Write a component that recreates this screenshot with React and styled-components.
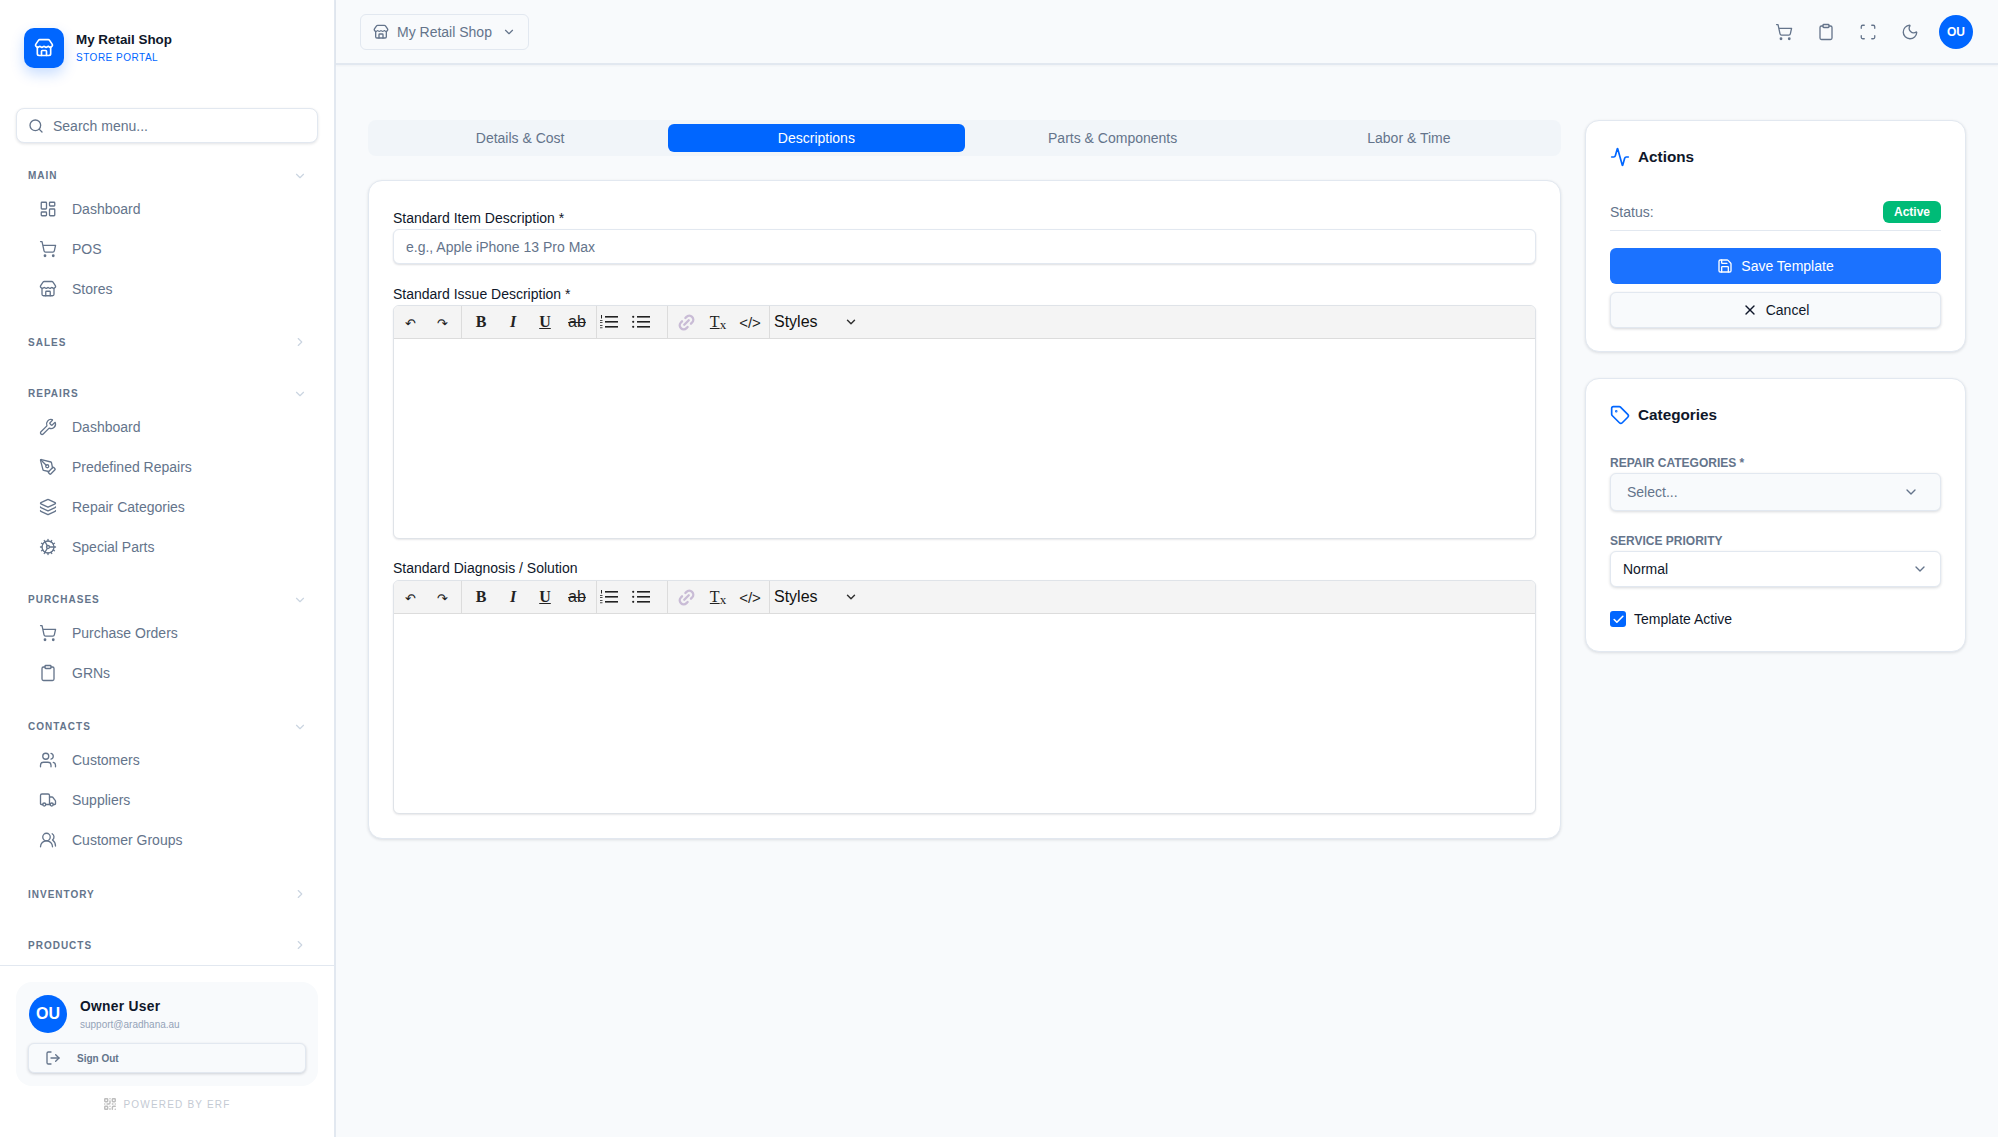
import styled, { createGlobalStyle } from "styled-components";
import {
  Activity, Check, ChevronDown, ChevronRight, Clipboard, Layers, LayoutDashboard, LogOut, Moon, PenTool,
  QrCode, Save, Scan, Search, ShoppingCart, Store, Tag, Truck, Users, UsersRound, Wrench, X, Link2, Cog,
} from "lucide-react";

const GlobalStyle = createGlobalStyle`
  * { box-sizing: border-box; }
  html, body { margin: 0; height: 100%; }
  body {
    font-family: "Liberation Sans", Arial, sans-serif;
    background: #f8fafc;
    color: #0f172a;
    overflow: hidden;
  }
`;

const Shell = styled.div`
  display: flex;
  width: 1998px;
  height: 1137px;
`;

/* sidebar */
const Sidebar = styled.aside`
  width: 336px;
  flex: none;
  display: flex;
  flex-direction: column;
  background: #fff;
  border-right: 2px solid #e2e8f0;
`;

const Brand = styled.div`
  display: flex;
  align-items: center;
  gap: 12px;
  padding: 28px 24px 0;
`;

const LogoBox = styled.div`
  width: 40px;
  height: 40px;
  border-radius: 10px;
  background: #0066ff;
  color: #fff;
  display: flex;
  align-items: center;
  justify-content: center;
  box-shadow: 0 6px 14px rgba(0, 102, 255, 0.22);
`;

const BrandName = styled.div`
  font-size: 13.4px;
  font-weight: 700;
  line-height: 18px;
  color: #0f172a;
`;

const BrandSub = styled.div`
  font-size: 10px;
  line-height: 14px;
  margin-top: 2px;
  letter-spacing: 0.5px;
  color: #0066ff;
`;

const SearchBox = styled.label`
  display: flex;
  align-items: center;
  gap: 7px;
  height: 35px;
  margin: 40px 16px 0;
  padding: 0 11px;
  border: 1px solid #e2e8f0;
  border-radius: 8px;
  background: #fff;
  color: #64748b;
  box-shadow: 0 1px 3px rgba(15, 23, 42, 0.12);
`;

const SearchInput = styled.input`
  border: 0;
  outline: 0;
  flex: 1;
  min-width: 0;
  font: 14px "Liberation Sans", Arial, sans-serif;
  background: transparent;
  &::placeholder { color: #64748b; opacity: 1; }
`;

const Nav = styled.nav`
  flex: 1;
  min-height: 0;
  overflow: hidden;
  padding-top: 19px;
`;

const Section = styled.div`
  margin-bottom: ${(p) => p.$after}px;
`;

const SectionHead = styled.div`
  display: flex;
  align-items: center;
  justify-content: space-between;
  height: ${(p) => (p.$open ? "27px" : "26px")};
  padding: 0 27px 0 28px;
  font-size: 10px;
  font-weight: 700;
  letter-spacing: 1px;
  color: #64748b;
  svg { color: #cbd5e1; }
`;

const NavItem = styled.a`
  display: flex;
  align-items: center;
  gap: 15px;
  height: 40px;
  padding-left: 39px;
  font-size: 14px;
  color: #64748b;
`;

const Footer = styled.div`
  height: 172px;
  flex: none;
  border-top: 1px solid #e2e8f0;
  padding: 16px 16px 0;
`;

const UserCard = styled.div`
  height: 104px;
  padding: 13px 12px;
  border-radius: 16px;
  background: #f8fafc;
`;

const UserRow = styled.div`
  display: flex;
  align-items: center;
  gap: 13px;
  padding-left: 1px;
`;

const Avatar = styled.div`
  width: ${(p) => p.$size}px;
  height: ${(p) => p.$size}px;
  flex: none;
  margin-left: ${(p) => p.$shift || 0}px;
  border-radius: 50%;
  background: #0066ff;
  color: #fff;
  font-size: ${(p) => p.$font}px;
  font-weight: 700;
  display: flex;
  align-items: center;
  justify-content: center;
`;

const UserName = styled.div`
  font-size: 13.8px;
  font-weight: 700;
  letter-spacing: 0.3px;
  line-height: 18px;
  padding-top: 2px;
`;

const UserMail = styled.div`
  font-size: 10px;
  line-height: 14px;
  margin-top: 2px;
  color: #94a3b8;
`;

const SignOut = styled.button`
  display: flex;
  align-items: center;
  gap: 16px;
  width: 100%;
  height: 30px;
  margin-top: 10px;
  padding: 0 16px;
  border: 1px solid #e2e8f0;
  border-radius: 6px;
  background: #f8fafc;
  color: #64748b;
  font: 700 10px "Liberation Sans", Arial, sans-serif;
  box-shadow: 0 1px 3px rgba(15, 23, 42, 0.18);
`;

const Powered = styled.div`
  display: flex;
  align-items: center;
  justify-content: center;
  gap: 6px;
  margin-top: 11px;
  font-size: 10px;
  letter-spacing: 1.2px;
  color: #c4cad3;
  svg { color: #bdbdbd; }
`;

/* main column */
const Main = styled.main`
  flex: 1;
  min-width: 0;
  display: flex;
  flex-direction: column;
`;

const Topbar = styled.header`
  height: 65px;
  flex: none;
  display: flex;
  align-items: center;
  justify-content: space-between;
  padding: 0 25px 0 24px;
  border-bottom: 2px solid #e2e8f0;
  box-shadow: 0 1px 2px rgba(15, 23, 42, 0.04);
`;

const ShopPicker = styled.div`
  display: flex;
  align-items: center;
  gap: 8px;
  width: 169px;
  height: 36px;
  padding: 0 12px;
  border: 1px solid #e2e8f0;
  border-radius: 6px;
  font-size: 14px;
  color: #64748b;
  span { flex: 1; white-space: nowrap; }
`;

const TopActions = styled.div`
  display: flex;
  align-items: center;
  gap: 24px;
  color: #64748b;
`;

const Content = styled.div`
  display: grid;
  grid-template-columns: 1fr 381px;
  gap: 24px;
  align-items: start;
  padding: 55px 32px 0 32px;
`;

const Tabs = styled.div`
  display: grid;
  grid-template-columns: repeat(4, 1fr);
  height: 36px;
  padding: 4px;
  margin-bottom: 24px;
  border-radius: 8px;
  background: #f1f5f9;
`;

const Tab = styled.div`
  display: flex;
  align-items: center;
  justify-content: center;
  border-radius: 6px;
  font-size: 14px;
  color: ${(p) => (p.$active ? "#fff" : "#64748b")};
  background: ${(p) => (p.$active ? "#0066ff" : "transparent")};
`;

const Card = styled.section`
  background: #fff;
  border: 1px solid #e2e8f0;
  border-radius: 14px;
  box-shadow: 0 1px 3px rgba(15, 23, 42, 0.12);
  padding: ${(p) => p.$pad || "24px"};
`;

const FieldLabel = styled.label`
  display: block;
  font-size: 14px;
  line-height: 17px;
  margin-top: ${(p) => p.$top || 0}px;
  margin-bottom: ${(p) => p.$bottom || 2}px;
`;

const TextInput = styled.input`
  display: block;
  width: 100%;
  height: 35px;
  padding: 0 12px;
  border: 1px solid #e2e8f0;
  border-radius: 6px;
  outline: 0;
  font: 14px "Liberation Sans", Arial, sans-serif;
  box-shadow: 0 1px 2px rgba(15, 23, 42, 0.14);
  &::placeholder { color: #64748b; opacity: 1; }
`;

/* rich text editor */
const Editor = styled.div`
  height: 234px;
  border: 1px solid #dfe3e8;
  border-radius: 6px;
  overflow: hidden;
  background: #fff;
  box-shadow: 0 1px 2px rgba(15, 23, 42, 0.1);
`;

const Toolbar = styled.div`
  display: flex;
  align-items: center;
  height: 33px;
  background: #f4f4f4;
  border-bottom: 1px solid #dcdcdc;
  color: #222;
`;

const ToolBtn = styled.div`
  width: 32px;
  height: 32px;
  flex: none;
  display: flex;
  align-items: center;
  justify-content: center;
  padding-top: ${(p) => p.$drop || 0}px;
  font-size: ${(p) => p.$size || 16}px;
  font-family: ${(p) => (p.$serif ? '"Liberation Serif", serif' : '"Liberation Sans", Arial, sans-serif')};
  font-weight: ${(p) => (p.$bold ? 700 : 400)};
  font-style: ${(p) => (p.$italic ? "italic" : "normal")};
  text-decoration: ${(p) => p.$deco || "none"};
`;

const ToolSep = styled.div`
  width: 1px;
  height: 32px;
  flex: none;
  background: #dcdcdc;
  margin: 0 ${(p) => (p.$right === undefined ? 3 : p.$right)}px 0 ${(p) => (p.$left === undefined ? 3 : p.$left)}px;
`;

const TxMark = styled.span`
  text-decoration: underline;
`;

const TxSub = styled.span`
  font-size: 13px;
  margin-top: 5px;
`;

const StylesPick = styled.div`
  display: flex;
  align-items: center;
  justify-content: space-between;
  width: 88px;
  padding: 0 3px 0 1px;
  font-size: 16px;
  color: #111;
`;

/* right column */
const SideCol = styled.div`
  display: flex;
  flex-direction: column;
  gap: 26px;
`;

const CardTitle = styled.h3`
  display: flex;
  align-items: center;
  gap: 8px;
  margin: 0;
  height: 22px;
  font-size: 15.3px;
  font-weight: 700;
  color: #0f172a;
  svg { color: #0066ff; }
`;

const StatusRow = styled.div`
  display: flex;
  align-items: center;
  justify-content: space-between;
  height: 34px;
  margin-top: 29px;
  padding-bottom: 4px;
  border-bottom: 1px solid #e2e8f0;
  font-size: 14px;
  color: #64748b;
`;

const Badge = styled.span`
  display: inline-flex;
  align-items: center;
  justify-content: center;
  width: 58px;
  height: 22px;
  border-radius: 6px;
  background: #00bb77;
  color: #fff;
  font-size: 12px;
  font-weight: 700;
`;

const ActionBtn = styled.button`
  display: flex;
  align-items: center;
  justify-content: center;
  gap: 8px;
  width: 100%;
  height: 36px;
  margin-top: ${(p) => p.$top}px;
  border-radius: 6px;
  font: 14px "Liberation Sans", Arial, sans-serif;
  border: ${(p) => (p.$primary ? "0" : "1px solid #e2e8f0")};
  background: ${(p) => (p.$primary ? "#1b72ff" : "#f8fafc")};
  color: ${(p) => (p.$primary ? "#fff" : "#0f172a")};
  box-shadow: ${(p) => (p.$primary ? "none" : "0 1px 3px rgba(15, 23, 42, 0.18)")};
`;

const SmallLabel = styled.div`
  font-size: 12px;
  font-weight: 700;
  line-height: 15px;
  margin-top: ${(p) => p.$top}px;
  margin-bottom: 2px;
  color: #64748b;
`;

const SelectBox = styled.div`
  display: flex;
  align-items: center;
  justify-content: space-between;
  height: ${(p) => p.$height}px;
  padding: 0 ${(p) => p.$right}px 0 ${(p) => p.$left}px;
  border: 1px solid #e2e8f0;
  border-radius: 6px;
  font-size: 14px;
  color: ${(p) => p.$color};
  background: ${(p) => p.$bg};
  box-shadow: 0 1px 3px rgba(15, 23, 42, 0.16);
  svg { color: #64748b; }
`;

const CheckRow = styled.label`
  display: flex;
  align-items: center;
  gap: 8px;
  height: 16px;
  margin-top: 24px;
  font-size: 14px;
`;

const CheckBox = styled.span`
  width: 16px;
  height: 16px;
  border-radius: 3px;
  background: #0066ff;
  color: #fff;
  display: flex;
  align-items: center;
  justify-content: center;
`;

const nav = [
  { title: "MAIN", after: 20, items: [["Dashboard", LayoutDashboard], ["POS", ShoppingCart], ["Stores", Store]] },
  { title: "SALES", after: 25 },
  { title: "REPAIRS", after: 19, items: [["Dashboard", Wrench], ["Predefined Repairs", PenTool], ["Repair Categories", Layers], ["Special Parts", Cog]] },
  { title: "PURCHASES", after: 20, items: [["Purchase Orders", ShoppingCart], ["GRNs", Clipboard]] },
  { title: "CONTACTS", after: 21, items: [["Customers", Users], ["Suppliers", Truck], ["Customer Groups", UsersRound]] },
  { title: "INVENTORY", after: 25 },
  { title: "PRODUCTS", after: 25 },
];

const OrderedIcon = () => (
  <svg width="18" height="14" viewBox="0 0 18 14" fill="currentColor">
    <rect x="5" y="1" width="13" height="1.6" />
    <rect x="5" y="6" width="13" height="1.6" />
    <rect x="5" y="11" width="13" height="1.6" />
    <rect x="1" y="0" width="1" height="3.5" />
    <rect x="0" y="5" width="2.5" height="0.8" />
    <rect x="0" y="7" width="2.5" height="0.8" />
    <rect x="0" y="10" width="2.5" height="0.8" />
    <rect x="0" y="12.4" width="2.5" height="0.8" />
  </svg>
);

const BulletIcon = () => (
  <svg width="18" height="14" viewBox="0 0 18 14" fill="currentColor">
    <rect x="5" y="1" width="13" height="1.6" />
    <rect x="5" y="6" width="13" height="1.6" />
    <rect x="5" y="11" width="13" height="1.6" />
    <circle cx="1.2" cy="1.8" r="1.1" />
    <circle cx="1.2" cy="6.8" r="1.1" />
    <circle cx="1.2" cy="11.8" r="1.1" />
  </svg>
);

const RichEditor = () => (
  <Editor>
    <Toolbar>
      <ToolBtn $size={13} $drop={3}>↶</ToolBtn>
      <ToolBtn $size={13} $drop={3}>↷</ToolBtn>
      <ToolSep />
      <ToolBtn $serif $bold>B</ToolBtn>
      <ToolBtn $serif $bold $italic>I</ToolBtn>
      <ToolBtn $serif $bold $deco="underline">U</ToolBtn>
      <ToolBtn $deco="line-through">ab</ToolBtn>
      <ToolSep $right={-4} />
      <ToolBtn><OrderedIcon /></ToolBtn>
      <ToolBtn><BulletIcon /></ToolBtn>
      <ToolSep $left={10} $right={2} />
      <ToolBtn><Link2 size={19} color="#c9bcd6" strokeWidth={3} style={{ transform: "rotate(-45deg)" }} /></ToolBtn>
      <ToolBtn $serif>
        <TxMark>T</TxMark>
        <TxSub>x</TxSub>
      </ToolBtn>
      <ToolBtn $size={15}>&lt;/&gt;</ToolBtn>
      <ToolSep />
      <StylesPick>Styles <ChevronDown size={14} strokeWidth={2.5} color="#333" /></StylesPick>
    </Toolbar>
  </Editor>
);

export default function App() {
  return (
    <Shell>
      <GlobalStyle />
      <Sidebar>
        <Brand>
          <LogoBox><Store size={20} /></LogoBox>
          <div>
            <BrandName>My Retail Shop</BrandName>
            <BrandSub>STORE PORTAL</BrandSub>
          </div>
        </Brand>
        <SearchBox>
          <Search size={16} />
          <SearchInput placeholder="Search menu..." />
        </SearchBox>
        <Nav>
          {nav.map((s) => (
            <Section key={s.title} $after={s.after}>
              <SectionHead $open={!!s.items}>
                {s.title}
                {s.items ? <ChevronDown size={14} /> : <ChevronRight size={14} />}
              </SectionHead>
              {s.items && s.items.map(([label, Icon]) => (
                <NavItem key={label}>
                  <Icon size={18} strokeWidth={1.75} />
                  {label}
                </NavItem>
              ))}
            </Section>
          ))}
        </Nav>
        <Footer>
          <UserCard>
            <UserRow>
              <Avatar $size={38} $font={16}>OU</Avatar>
              <div>
                <UserName>Owner User</UserName>
                <UserMail>support@aradhana.au</UserMail>
              </div>
            </UserRow>
            <SignOut><LogOut size={16} />Sign Out</SignOut>
          </UserCard>
          <Powered><QrCode size={14} strokeWidth={2.5} />POWERED BY ERF</Powered>
        </Footer>
      </Sidebar>

      <Main>
        <Topbar>
          <ShopPicker>
            <Store size={16} />
            <span>My Retail Shop</span>
            <ChevronDown size={14} />
          </ShopPicker>
          <TopActions>
            <ShoppingCart size={18} strokeWidth={1.75} />
            <Clipboard size={18} strokeWidth={1.75} />
            <Scan size={18} strokeWidth={1.75} />
            <Moon size={18} strokeWidth={1.75} />
            <Avatar $size={34} $font={12} $shift={-4}>OU</Avatar>
          </TopActions>
        </Topbar>
        <Content>
          <div>
            <Tabs>
              <Tab>Details &amp; Cost</Tab>
              <Tab $active>Descriptions</Tab>
              <Tab>Parts &amp; Components</Tab>
              <Tab>Labor &amp; Time</Tab>
            </Tabs>
            <Card $pad="29px 24px 24px">
              <FieldLabel>Standard Item Description *</FieldLabel>
              <TextInput placeholder="e.g., Apple iPhone 13 Pro Max" />
              <FieldLabel $top={22}>Standard Issue Description *</FieldLabel>
              <RichEditor />
              <FieldLabel $top={21} $bottom={3}>Standard Diagnosis / Solution</FieldLabel>
              <RichEditor />
            </Card>
          </div>
          <SideCol>
            <Card $pad="25px 24px 23px">
              <CardTitle><Activity size={20} />Actions</CardTitle>
              <StatusRow>Status:<Badge>Active</Badge></StatusRow>
              <ActionBtn $primary $top={17}><Save size={16} />Save Template</ActionBtn>
              <ActionBtn $top={8}><X size={16} />Cancel</ActionBtn>
            </Card>
            <Card $pad="25px 24px 24px">
              <CardTitle><Tag size={20} />Categories</CardTitle>
              <SmallLabel $top={30}>REPAIR CATEGORIES *</SmallLabel>
              <SelectBox $height={38} $left={16} $right={21} $color="#64748b" $bg="#f8fafc">
                Select...
                <ChevronDown size={16} />
              </SelectBox>
              <SmallLabel $top={23}>SERVICE PRIORITY</SmallLabel>
              <SelectBox $height={36} $left={12} $right={12} $color="#0f172a" $bg="#fff">
                Normal
                <ChevronDown size={16} />
              </SelectBox>
              <CheckRow>
                <CheckBox><Check size={13} strokeWidth={3} /></CheckBox>
                Template Active
              </CheckRow>
            </Card>
          </SideCol>
        </Content>
      </Main>
    </Shell>
  );
}
